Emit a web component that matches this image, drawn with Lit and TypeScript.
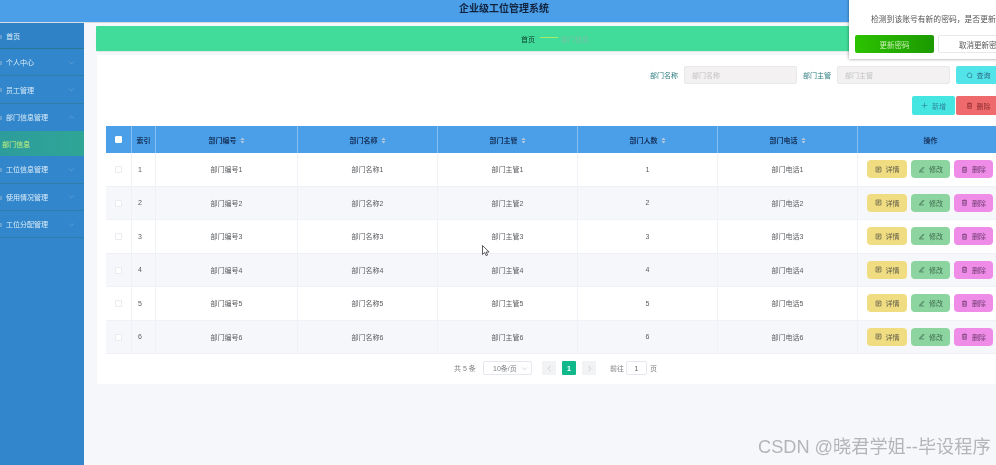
import { LitElement, html, css, svg } from "lit";
import { customElement } from "lit/decorators.js";

const chevDown = html`<svg class="chev" viewBox="0 0 10 10"><path d="M1.5 3.5 5 7l3.5-3.5" fill="none" stroke="currentColor" stroke-width="1"/></svg>`;
const chevUp = html`<svg class="chev" viewBox="0 0 10 10"><path d="M1.5 6.5 5 3l3.5 3.5" fill="none" stroke="currentColor" stroke-width="1"/></svg>`;
const sortIcon = html`<svg class="sort" viewBox="0 0 6 8"><path d="M3 .5 5.5 3.3H.5zM3 7.5 .5 4.7h5z" fill="#b6c9db"/></svg>`;
const line = (d: string) => svg`<path d=${d} fill="none" stroke="currentColor" stroke-width="1"/>`;
const docIcon = html`<svg class="ic" viewBox="0 0 10 10">${line("M1.5 1.5h7v7h-7zM3.5 3.5h3M3.5 5h3M3.5 6.5h2")}</svg>`;
const editIcon = html`<svg class="ic" viewBox="0 0 10 10">${line("M1.5 8.5h7M3 6.5 7.5 1.5l1 1L4 7.2 2.5 7.5z")}</svg>`;
const trashIcon = html`<svg class="ic" viewBox="0 0 10 10">${line("M1.5 2.5h7M3.5 2.5v-1h3v1M2.5 2.5v6.5h5v-6.5M4 4.5v3M6 4.5v3")}</svg>`;
const searchIcon = html`<svg class="ic" viewBox="0 0 10 10">${line("M5 1.5a3.3 3.3 0 1 0 .01 0M7.2 7.2l1.5 1.5")}</svg>`;
const plusIcon = html`<svg class="ic" viewBox="0 0 10 10">${line("M5 1v8M1 5h8")}</svg>`;

const menu = [
  { t: "首页", plain: true },
  { t: "个人中心" },
  { t: "员工管理" },
  { t: "部门信息管理", open: true },
  { t: "部门信息", sub: true },
  { t: "工位信息管理" },
  { t: "使用情况管理" },
  { t: "工位分配管理" },
];
const cols = ["部门编号", "部门名称", "部门主管", "部门人数", "部门电话"];
const rows = [1, 2, 3, 4, 5, 6];

@customElement("app-root")
export class AppRoot extends LitElement {
  static styles = css`
    :host { display: block; width: 996px; height: 465px; overflow: hidden; position: relative; background: #f5f7fa;
      font-family: "Liberation Sans", "Noto Sans CJK SC", sans-serif; font-size: 7px; color: #5a5c60; }
    .wrap { filter: blur(0.35px); height: 465px; display: flex; flex-direction: column; }
    .top { height: 23px; flex: none; background: #4a9fe8; border-bottom: 1px solid #d5dde3; box-sizing: border-box;
      display: flex; align-items: center; justify-content: center; padding-left: 12px; padding-bottom: 7px; font-size: 10px; font-weight: 700; color: #12233f; }
    .body { flex: 1; display: flex; min-height: 0; }
    .side { width: 84px; flex: none; background: #3186cc; color: #dcecf8; font-size: 7px; }
    .mi { height: 27.4px; box-sizing: border-box; display: flex; align-items: center; padding-left: 6px; padding-right: 9px; justify-content: space-between; border-bottom: 1px solid #2f7dab; position: relative; }
    .mi::before { content: ""; position: absolute; left: 0; top: 12px; width: 2px; height: 4px; background: #8fb4d4; opacity: .55; }
    .mi.plain { height: 26px; background: #2f82c6; border-bottom-color: #2a7896; }
    .mi.open { border-bottom: none; }
    .mi.sub { height: 25px; padding-left: 2px; background: linear-gradient(90deg, #2d9c9c, #2fa596); color: #c6f27e; border-bottom: none; }
    .mi.sub::before { display: none; }
    .chev { width: 7px; height: 7px; color: #6ba8d8; }
    .main { flex: 1; padding: 3px 0 0 12px; display: flex; flex-direction: column; min-width: 0; }
    .crumb { width: 918px; height: 25px; flex: none; background: #41dc9a; border-radius: 1px; display: flex; align-items: center; justify-content: center; gap: 5px; box-shadow: 0 1px 1px #dfe7e6; color: #0f3b2a; }
    .crumb .sep { color: #c9ee5a; font-size: 7px; font-weight: 700; letter-spacing: -0.5px; width: 16px; text-align: center; transform: translateY(-1px); }
    .crumb .cur { color: #74c4a4; }
    .card { width: 917px; margin: 4px 0 0 1px; height: 329px; background: #fff; flex: none; box-sizing: border-box; padding: 11px 0 0 9px; display: flex; flex-direction: column; }
    .search { display: flex; align-items: center; height: 18px; padding-left: 544px; color: #2e7d80; font-size: 7px; }
    .search .lb { width: 28px; margin-right: 6px; white-space: nowrap; }
    .search .inp { width: 113px; height: 18px; box-sizing: border-box; background: #f3f1f1; border: 1px solid #e8e8e8; border-radius: 2px; color: #c3c3c3; padding-left: 7px; display: flex; align-items: center; margin-right: 6px; font-size: 7px; }
    .btn { display: flex; align-items: center; justify-content: center; gap: 4px; border-radius: 2px; box-sizing: border-box; white-space: nowrap; }
    .ic { width: 7px; height: 7px; flex: none; }
    .q { width: 44px; height: 18px; background: #53e4ea; color: #2c6a80; }
    .acts { display: flex; height: 19px; margin-top: 12px; padding-left: 806px; gap: 1px; }
    .add { width: 43px; background: #45e6e2; color: #2f87a0; }
    .del { width: 44px; background: #ef6a6c; color: #8c2b30; }
    table { border-collapse: separate; border-spacing: 0; table-layout: fixed; width: 898px; margin-top: 11px; }
    th { background: #4a9fe8; height: 27px; padding: 0; font-weight: 700; color: #17335c; text-align: center; border-right: 1px solid #86bff0; box-sizing: border-box; font-size: 7px; }
    td { height: 33.5px; padding: 0; text-align: center; border-right: 1px solid #eff1f6; border-bottom: 1px solid #eff1f6; box-sizing: border-box; font-weight: 400; }
    tr.alt td { background: #f5f7fa; }
    .sort { width: 5px; height: 7px; margin-left: 3px; vertical-align: -1px; }
    .cb { display: inline-block; width: 7px; height: 7px; box-sizing: border-box; border: 1px solid #e9ebef; background: #fff; border-radius: 1px; vertical-align: middle; }
    th .cb { background: #fff; border-color: #fff; }
    .ix { text-align: left; padding-left: 6px; }
    .ops { display: flex; gap: 4px; padding-left: 9px; }
    .op { width: 40px; height: 18px; border-radius: 4px; color: #5c5a4a; }
    .op.a { background: #f0dd82; }
    .op.b { background: #8dd5a0; width: 39px; color: #3d6a4d; }
    .op.c { background: #ee8ce8; width: 39px; color: #6d3a6b; }
    .pager { display: flex; align-items: center; height: 14px; margin-top: 7px; padding-left: 348px; color: #7d7f84; }
    .pager .tot { width: 29px; }
    .sel { width: 49px; height: 14px; box-sizing: border-box; border: 1px solid #e4e7ed; border-radius: 2px; display: flex; align-items: center; justify-content: space-between; padding: 0 3px 0 9px; margin-right: 10px; }
    .sel .chev { color: #c0c4cc; }
    .pg { width: 14px; height: 14px; background: #f2f3f5; color: #b8bbc2; display: flex; align-items: center; justify-content: center; margin-right: 6px; border-radius: 1px; }
    .pg.on { background: #10b88a; color: #fff; font-weight: 700; }
    .pg .chev { transform: rotate(-90deg); color: #b8bbc2; }
    .pg.prev .chev { transform: rotate(90deg); }
    .go { margin-left: 8px; width: 16px; }
    .num { width: 21px; height: 14px; box-sizing: border-box; border: 1px solid #e4e7ed; border-radius: 2px; display: flex; align-items: center; justify-content: center; margin-right: 3px; color: #606266; }
    .popup { position: absolute; left: 849px; top: -2px; width: 180px; height: 61px; background: #fff; box-shadow: 0 0 3px rgba(0,0,0,.45); box-sizing: border-box; padding: 2px 0 0 6px; font-size: 7.8px; color: #555; filter: blur(0.35px); }
    .popup .msg { margin: 15px 0 0 16px; white-space: nowrap; line-height: 10px; height: 20px; }
    .popup .row { display: flex; gap: 4px; }
    .popup .ok { width: 79px; height: 18px; background: linear-gradient(90deg, #2cc200, #1c9a00); color: #c8f0b4; font-size: 7.5px; }
    .popup .no { width: 90px; height: 18px; border: 1px solid #e8e8e8; color: #555; font-size: 7.5px; justify-content: flex-start; padding-left: 20px; }
    .cursor { position: absolute; left: 482px; top: 245px; width: 8px; height: 12px; }
    .mark { position: absolute; left: 758px; top: 436px; font-size: 18.2px; line-height: 22px; color: #b4b5b8; white-space: nowrap; font-family: "Liberation Sans", "Noto Sans CJK SC", sans-serif; }
  `;

  render() {
    return html`
      <div class="wrap">
        <div class="top">企业级工位管理系统</div>
        <div class="body">
          <nav class="side">
            ${menu.map(m => html`
              <div class="mi ${m.plain ? "plain" : ""} ${m.sub ? "sub" : ""} ${m.open ? "open" : ""}">
                <span>${m.t}</span>
                ${m.plain || m.sub ? "" : m.open ? chevUp : chevDown}
              </div>`)}
          </nav>
          <div class="main">
            <div class="crumb"><span>首页</span><span class="sep">~~~~~</span><span class="cur">部门信息</span></div>
            <div class="card">
              <div class="search">
                <span class="lb">部门名称</span><div class="inp">部门名称</div>
                <span class="lb">部门主管</span><div class="inp">部门主管</div>
                <div class="btn q">${searchIcon}查询</div>
              </div>
              <div class="acts">
                <div class="btn add">${plusIcon}新增</div>
                <div class="btn del">${trashIcon}删除</div>
              </div>
              <table>
                <colgroup>
                  <col style="width:26px"><col style="width:24px">
                  <col style="width:142px"><col style="width:140px"><col style="width:140px"><col style="width:140px"><col style="width:140px"><col style="width:146px">
                </colgroup>
                <thead><tr>
                  <th><span class="cb"></span></th><th>索引</th>
                  ${cols.map(c => html`<th>${c}${sortIcon}</th>`)}
                  <th>操作</th>
                </tr></thead>
                <tbody>
                  ${rows.map(i => html`<tr class=${i % 2 === 0 ? "alt" : ""}>
                    <td><span class="cb"></span></td>
                    <td class="ix">${i}</td>
                    <td>部门编号${i}</td><td>部门名称${i}</td><td>部门主管${i}</td><td>${i}</td><td>部门电话${i}</td>
                    <td><div class="ops">
                      <div class="btn op a">${docIcon}详情</div>
                      <div class="btn op b">${editIcon}修改</div>
                      <div class="btn op c">${trashIcon}删除</div>
                    </div></td>
                  </tr>`)}
                </tbody>
              </table>
              <div class="pager">
                <span class="tot">共 5 条</span>
                <div class="sel"><span>10条/页</span>${chevDown}</div>
                <div class="pg prev">${chevDown}</div>
                <div class="pg on">1</div>
                <div class="pg">${chevDown}</div>
                <span class="go">前往</span>
                <div class="num">1</div>
                <span>页</span>
              </div>
            </div>
          </div>
        </div>
      </div>
      <div class="popup">
        <div class="msg">检测到该账号有新的密码，是否更新?</div>
        <div class="row">
          <div class="btn ok">更新密码</div>
          <div class="btn no">取消更新密码</div>
        </div>
      </div>
      <svg class="cursor" viewBox="0 0 8 12"><path d="M.5.5v9l2.2-2 1.5 3.2 1.4-.7-1.5-3h3z" fill="#fff" stroke="#333" stroke-width=".8"/></svg>
      <div class="mark">CSDN @晓君学姐--毕设程序</div>
    `;
  }
}
